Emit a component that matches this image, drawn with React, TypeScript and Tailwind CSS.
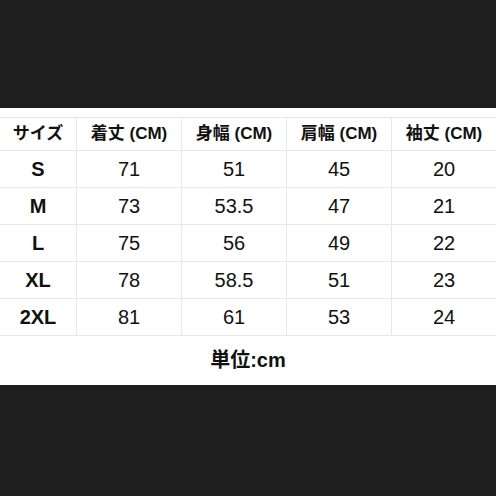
import React from "react";

const headers = ["サイズ", "着丈 (CM)", "身幅 (CM)", "肩幅 (CM)", "袖丈 (CM)"];
const rows = [
  ["S", "71", "51", "45", "20"],
  ["M", "73", "53.5", "47", "21"],
  ["L", "75", "56", "49", "22"],
  ["XL", "78", "58.5", "51", "23"],
  ["2XL", "81", "61", "53", "24"],
];

export default function App() {
  const font = { fontFamily: '"Liberation Sans", Arial, "Noto Sans CJK JP", sans-serif' };
  return (
    <div className="w-[496px] h-[496px] bg-[#1e1e1e] flex flex-col" style={font}>
      <div className="h-[108px]" />
      <div className="h-[277px] bg-white flex flex-col pt-[9px]">
        <div className="grid grid-cols-[76px_105px_105px_105px_105px] border-t border-[#e8e8e8]">
          {headers.map((h, i) => (
            <div
              key={h}
              className={`h-[33px] flex items-center justify-center text-[17px] font-bold text-[#111] border-b border-[#e8e8e8] ${i > 0 ? "border-l" : ""}`}
            >
              {h}
            </div>
          ))}
          {rows.map((r) =>
            r.map((c, i) => (
              <div
                key={r[0] + i}
                className={`h-[37px] flex items-center justify-center text-[20px] text-[#111] border-b border-[#e8e8e8] ${i === 0 ? "font-bold" : "border-l"}`}
              >
                {c}
              </div>
            ))
          )}
        </div>
        <div className="flex-1 flex items-center justify-center text-[20px] font-bold text-[#111] pb-[2px]">
          単位:cm
        </div>
      </div>
      <div className="flex-1" />
    </div>
  );
}
